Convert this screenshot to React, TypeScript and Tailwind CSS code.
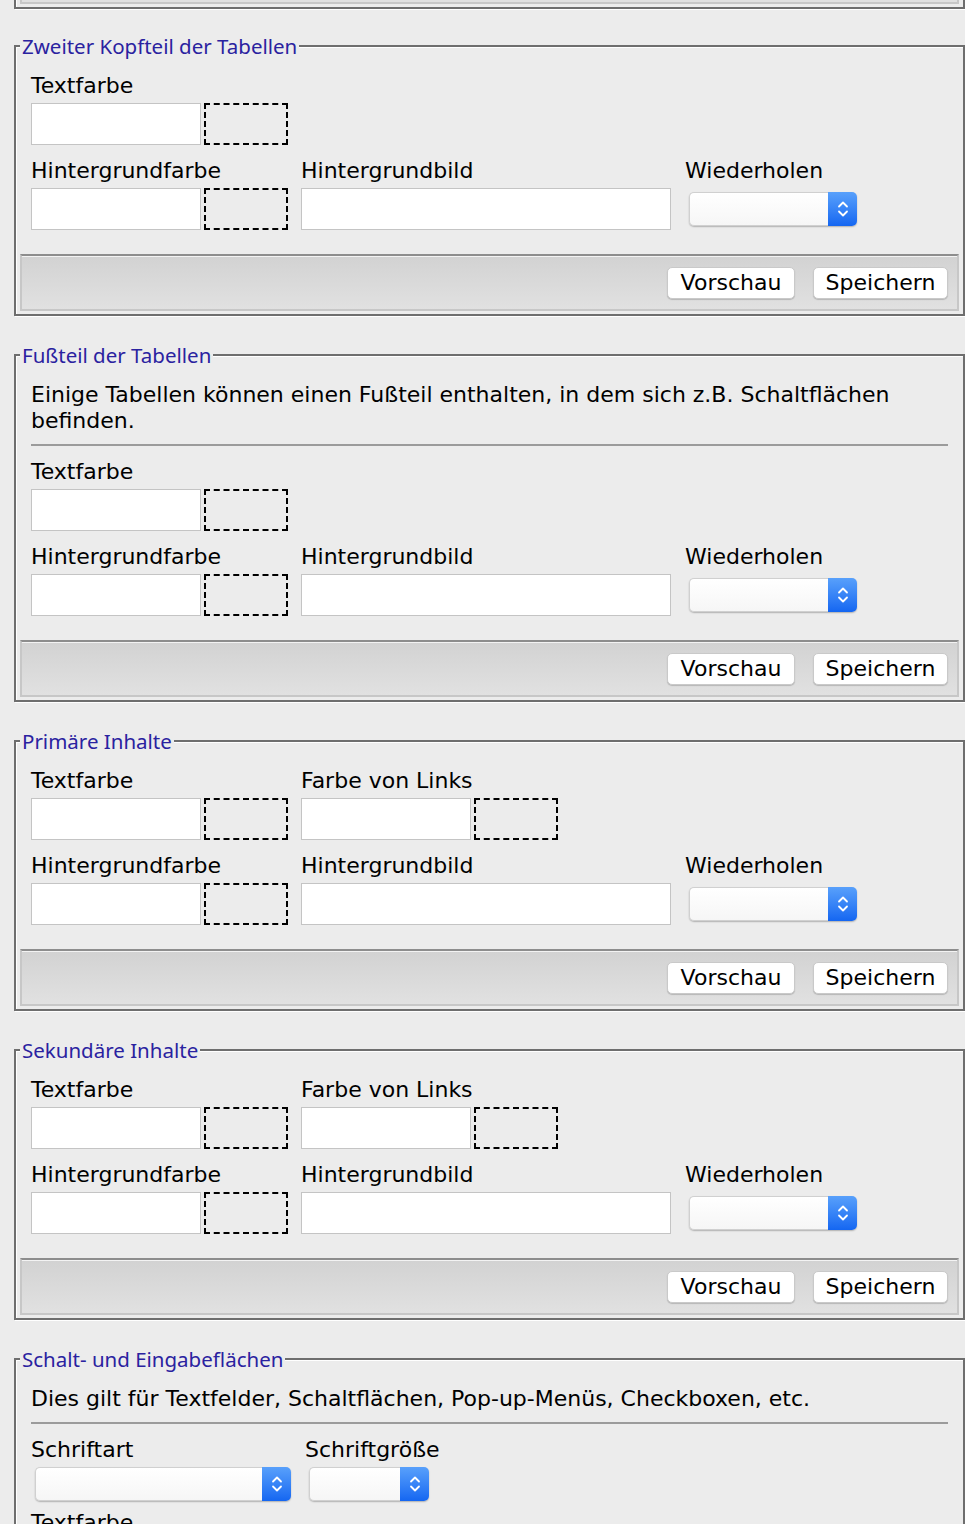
import React from "react";

const bodyFont = "font-['DejaVu_Sans',sans-serif]";
const labelCls = `${bodyFont} block text-[22px] leading-[26px] text-black whitespace-nowrap`;

function Label({ children }: { children: React.ReactNode }) {
  return <span className={labelCls}>{children}</span>;
}

// Text input followed by the dashed colour-preview swatch
function ColorField() {
  return (
    <div className="mt-1 flex">
      <input
        type="text"
        className="h-[42px] w-[170px] border border-[#c4c4c4] bg-white outline-none"
      />
      <div className="ml-[3px] h-[42px] w-[84px] border-2 border-dashed border-black" />
    </div>
  );
}

function Chevrons() {
  return (
    <svg width="12" height="20" viewBox="0 0 12 20" fill="none">
      <path d="M2 7.5 L6 3.5 L10 7.5" stroke="#fff" strokeWidth="1.8" strokeLinecap="round" strokeLinejoin="round" />
      <path d="M2 12.5 L6 16.5 L10 12.5" stroke="#fff" strokeWidth="1.8" strokeLinecap="round" strokeLinejoin="round" />
    </svg>
  );
}

// macOS-style popup menu
function PopUp({ cls }: { cls: string }) {
  return (
    <div className={`flex h-[34px] rounded-[5px] shadow-[0_1px_1.5px_rgba(0,0,0,0.25)] ${cls}`}>
      <div className="flex-1 rounded-l-[5px] border border-r-0 border-[#d0d0d0] bg-linear-to-b from-white to-[#f6f6f6]" />
      <div className="flex w-[29px] items-center justify-center rounded-r-[5px] bg-linear-to-b from-[#58a0fb] to-[#1466f1]">
        <Chevrons />
      </div>
    </div>
  );
}

function Button({ children, widthCls }: { children: React.ReactNode; widthCls: string }) {
  return (
    <button
      type="button"
      className={`${bodyFont} h-[32px] ${widthCls} rounded-[5px] border border-[#c9c9c9] bg-white text-[22px] leading-[30px] text-black shadow-[0_1px_1px_rgba(0,0,0,0.18)]`}
    >
      {children}
    </button>
  );
}

function Toolbar() {
  return (
    <div className="mt-[24px] flex h-[57px] items-center justify-end gap-[18px] border-2 border-[#c7c7c7] border-t-[#8d8d8d] bg-linear-to-b from-[#d2d2d2] to-[#e1e1e1] pr-[9px] shadow-[inset_0_1px_0_#f3f3f3]">
      <Button widthCls="w-[128px]">Vorschau</Button>
      <Button widthCls="w-[135px]">Speichern</Button>
    </div>
  );
}

function Section({
  title,
  children,
  first = false,
}: {
  title: string;
  children: React.ReactNode;
  first?: boolean;
}) {
  return (
    <fieldset
      className={`ml-[14px] ${first ? "mt-[25px]" : "mt-[27px]"} w-[951px] border-2 border-[#6e6e6e] px-[4px] pb-[3px] shadow-[1px_1px_0_#fff,inset_1px_1px_0_#fff]`}
    >
      <legend className="bg-[#ececec] px-[2px] font-['Noto_Sans',sans-serif] text-[20.5px] leading-[24px] text-[#2a22a0]">
        {title}
      </legend>
      <div className="px-[11px] pt-[15px]">{children}</div>
      <Toolbar />
    </fieldset>
  );
}

function Intro({ children }: { children: React.ReactNode }) {
  return (
    <>
      <p className={`${bodyFont} text-[22px] leading-[26px] text-black`}>{children}</p>
      <hr className="mt-[10px] h-[2px] border-0 bg-[#9b9b9b]" />
      <div className="h-[13px]" />
    </>
  );
}

// Background colour / image / repeat row shared by every section
function BackgroundRow() {
  return (
    <div className="mt-[13px] flex">
      <div className="w-[270px]">
        <Label>Hintergrundfarbe</Label>
        <ColorField />
      </div>
      <div className="w-[384px]">
        <Label>Hintergrundbild</Label>
        <input
          type="text"
          className="mt-1 h-[42px] w-[370px] border border-[#c4c4c4] bg-white outline-none"
        />
      </div>
      <div>
        <Label>Wiederholen</Label>
        <PopUp cls="ml-1 mt-2 w-[168px]" />
      </div>
    </div>
  );
}

function TextRow({ links }: { links?: boolean }) {
  return (
    <div className="flex">
      <div className="w-[270px]">
        <Label>Textfarbe</Label>
        <ColorField />
      </div>
      {links && (
        <div>
          <Label>Farbe von Links</Label>
          <ColorField />
        </div>
      )}
    </div>
  );
}

export default function App() {
  return (
    <div className="min-h-screen w-[965px] overflow-hidden bg-[#ececec] pb-10">
      {/* tail of the preceding panel */}
      <div className="ml-[14px] h-[9px] w-[951px] border-x-2 border-b-2 border-[#6e6e6e] px-[4px] pb-[3px] shadow-[1px_1px_0_#fff,inset_1px_0_0_#fff]">
        <div className="h-full border-x-2 border-b-2 border-[#c7c7c7] bg-[#e0e0e0]" />
      </div>

      <Section title="Zweiter Kopfteil der Tabellen" first>
        <TextRow />
        <BackgroundRow />
      </Section>

      <Section title="Fußteil der Tabellen">
        <Intro>
          Einige Tabellen können einen Fußteil enthalten, in dem sich z.B. Schaltflächen
          befinden.
        </Intro>
        <TextRow />
        <BackgroundRow />
      </Section>

      <Section title="Primäre Inhalte">
        <TextRow links />
        <BackgroundRow />
      </Section>

      <Section title="Sekundäre Inhalte">
        <TextRow links />
        <BackgroundRow />
      </Section>

      <Section title="Schalt- und Eingabeflächen">
        <Intro>Dies gilt für Textfelder, Schaltflächen, Pop-up-Menüs, Checkboxen, etc.</Intro>
        <div className="flex">
          <div className="w-[274px]">
            <Label>Schriftart</Label>
            <PopUp cls="m-1 w-[256px]" />
          </div>
          <div>
            <Label>Schriftgröße</Label>
            <PopUp cls="m-1 w-[120px]" />
          </div>
        </div>
        <div className="mt-[5px]">
          <TextRow />
        </div>
        <BackgroundRow />
      </Section>
    </div>
  );
}
